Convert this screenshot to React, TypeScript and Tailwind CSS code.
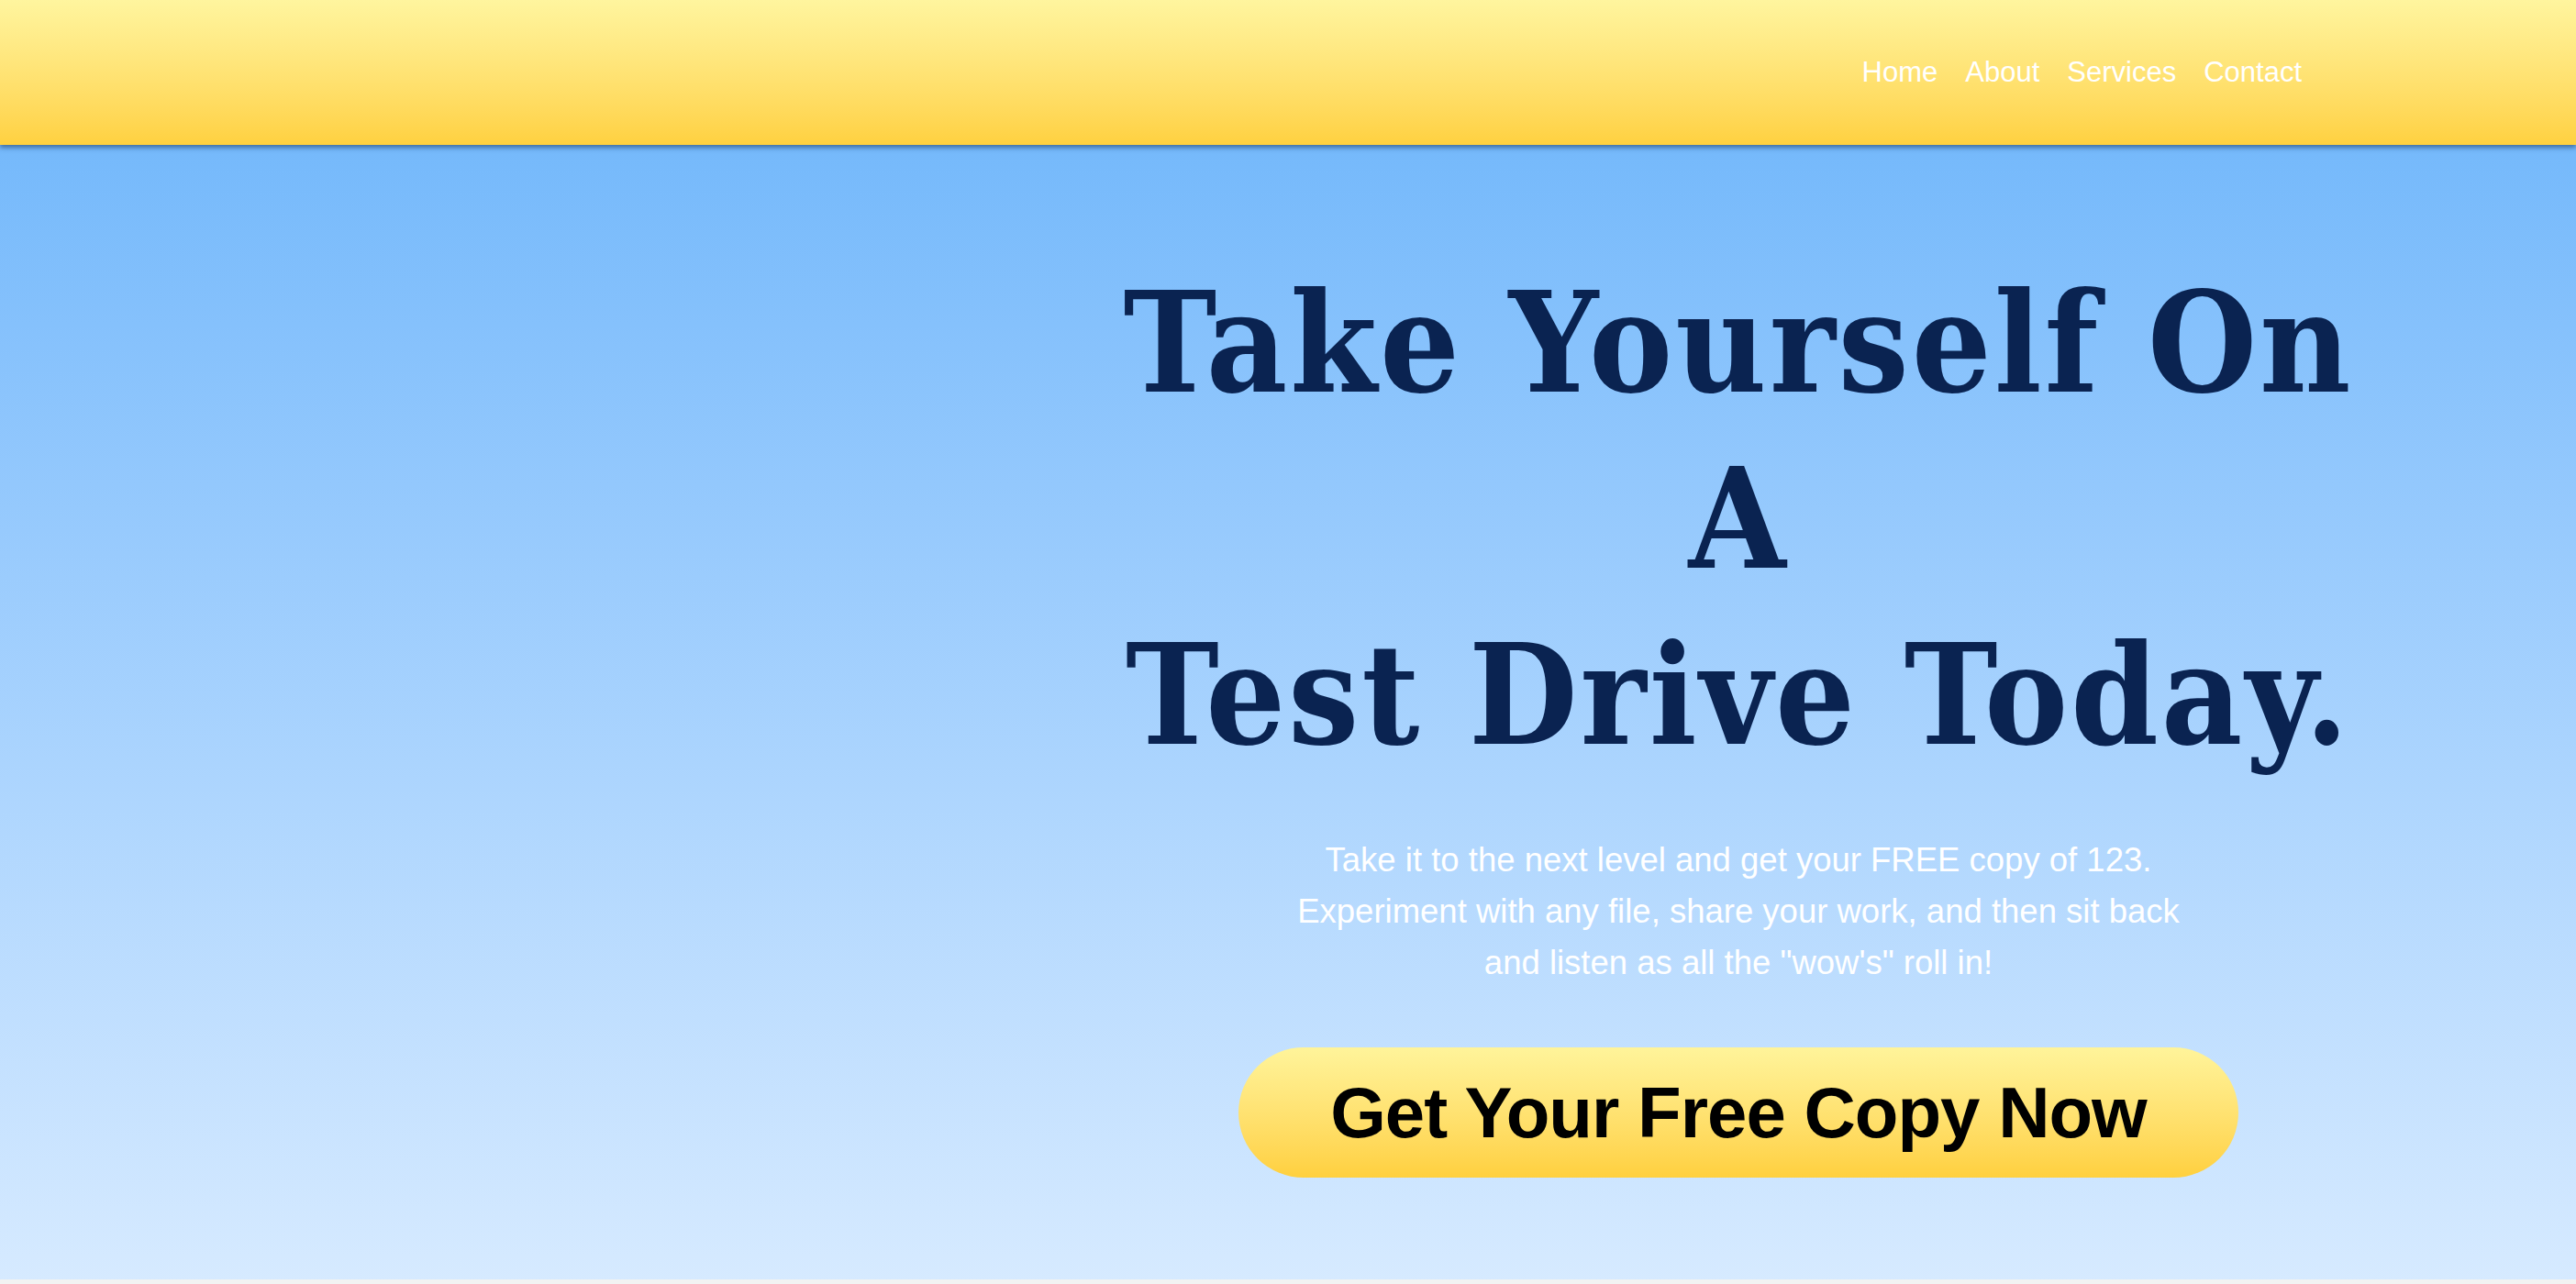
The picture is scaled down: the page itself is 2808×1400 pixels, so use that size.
import React from "react";

const links = ["Home", "About", "Services", "Contact"];

export default function App() {
  return (
    <div className="min-h-screen bg-[#f2f2f2]">
      <header className="relative z-10 flex h-[158px] items-center justify-end gap-[30px] bg-gradient-to-b from-[#fff59e] to-[#ffd13f] pr-[299px] shadow-[0_3px_5px_rgba(20,50,90,0.55)]">
        {links.map((l) => (
          <a
            key={l}
            href="#"
            className="font-['Liberation_Sans',Arial,sans-serif] text-[31px] text-white"
          >
            {l}
          </a>
        ))}
      </header>

      <section className="flex h-[1237px] bg-gradient-to-b from-[#75b9fb] to-[#d6eaff]">
        <div className="w-[1190px]"></div>
        <div className="flex w-[1410px] flex-col items-center pt-[120px]">
          <h1 className="whitespace-nowrap text-center font-['DejaVu_Serif',Georgia,serif] text-[152px] font-bold font-stretch-condensed leading-[192px] tracking-[3px] text-[#0a2351]">
            Take Yourself On
            <br />A<br />
            Test Drive Today.
          </h1>
          <p className="mt-[56px] max-w-[1010px] text-center font-['Liberation_Sans',Arial,sans-serif] text-[36.5px] leading-[56px] text-white">
            Take it to the next level and get your FREE copy of 123. Experiment
            with any file, share your work, and then sit back and listen as all
            the "wow's" roll in!
          </p>
          <button className="mt-[64px] h-[142px] w-[1090px] rounded-full bg-gradient-to-b from-[#fff49a] to-[#ffd03d] font-['Liberation_Sans',Arial,sans-serif] text-[78px] font-bold tracking-[-1px] text-black">
            Get Your Free Copy Now
          </button>
        </div>
      </section>
    </div>
  );
}
